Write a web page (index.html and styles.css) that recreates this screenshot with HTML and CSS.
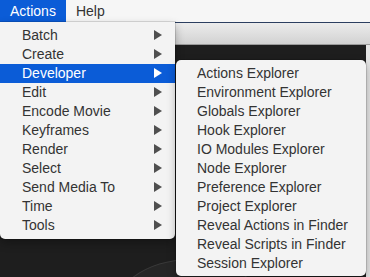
FILE: index.html
```html
<!DOCTYPE html>
<html lang="en">
<head>
    <meta charset="UTF-8">
    <meta name="viewport" content="width=device-width, initial-scale=1.0">
    <link rel="stylesheet" href="styles.css">
</head>
<body>

<div class="menubar">
    <div class="bar-item open">Actions</div>
    <div class="bar-item">Help</div>
</div>

<div class="window">
    <div class="titlebar"></div>
    <div class="viewer">
        <div class="glow"></div>
        <div class="scroll"></div>
    </div>
</div>

<ul class="menu main-menu">
    <li class="item sub">Batch</li>
    <li class="item sub">Create</li>
    <li class="item sub active">Developer</li>
    <li class="item sub">Edit</li>
    <li class="item sub">Encode Movie</li>
    <li class="item sub">Keyframes</li>
    <li class="item sub">Render</li>
    <li class="item sub">Select</li>
    <li class="item sub">Send Media To</li>
    <li class="item sub">Time</li>
    <li class="item sub">Tools</li>
</ul>

<ul class="menu sub-menu">
    <li class="item">Actions Explorer</li>
    <li class="item">Environment Explorer</li>
    <li class="item">Globals Explorer</li>
    <li class="item">Hook Explorer</li>
    <li class="item">IO Modules Explorer</li>
    <li class="item">Node Explorer</li>
    <li class="item">Preference Explorer</li>
    <li class="item">Project Explorer</li>
    <li class="item">Reveal Actions in Finder</li>
    <li class="item">Reveal Scripts in Finder</li>
    <li class="item">Session Explorer</li>
</ul>

</body>
</html>
```

FILE: styles.css
```css
body {
    margin: 0;
    width: 370px;
    height: 277px;
    overflow: hidden;
    position: relative;
    font-family: "Liberation Sans", Arial, sans-serif;
    font-size: 14px;
    color: #333;
    background: #1b1b1b;
}

.menubar {
    display: flex;
    height: 22px;
    background: #f6f6f6;
}
.bar-item {
    padding: 0 10px;
    line-height: 22px;
    color: #333;
}
.bar-item.open {
    background: #0b5cd7;
    color: #fff;
}

.window {
    display: flex;
    flex-direction: column;
    height: 255px;
}
.titlebar {
    height: 21px;
    border-top: 1px solid #2c3f60;
    background: linear-gradient(#ececec, #d2d2d2);
    border-bottom: 1px solid #9a9a9a;
}
.viewer {
    flex: 1;
    position: relative;
    background: #1e1e1e;
    overflow: hidden;
}
.glow {
    position: absolute;
    left: 110px;
    top: 215px;
    width: 160px;
    height: 120px;
    border-radius: 50%;
    background: #262626;
    box-shadow: 0 -1px 0 #3a3a3a;
}
.scroll {
    position: absolute;
    right: 0;
    top: 0;
    bottom: 0;
    width: 4px;
    background: #e4e4e4;
}

/* menus */
.menu {
    position: absolute;
    margin: 0;
    padding: 4px 0;
    list-style: none;
    background: #f3f3f3;
    box-shadow: 0 0 0 1px rgba(0, 0, 0, 0.12), 0 4px 10px rgba(0, 0, 0, 0.3);
}
.main-menu {
    left: 0;
    top: 22px;
    width: 175px;
    border-radius: 0 0 5px 5px;
}
.sub-menu {
    left: 176px;
    top: 60px;
    width: 190px;
    padding-bottom: 3px;
    border-radius: 5px;
}
.item {
    position: relative;
    height: 19px;
    line-height: 19px;
    padding-left: 22px;
    white-space: nowrap;
}
.sub-menu .item {
    padding-left: 21px;
}
.item.sub::after {
    content: '';
    position: absolute;
    left: 154px;
    top: 4px;
    border-left: 8px solid #4f4f4f;
    border-top: 5px solid transparent;
    border-bottom: 5px solid transparent;
}
.item.active {
    background: #0b5cd7;
    color: #fff;
}
.item.active::after {
    border-left-color: #fff;
}
```
